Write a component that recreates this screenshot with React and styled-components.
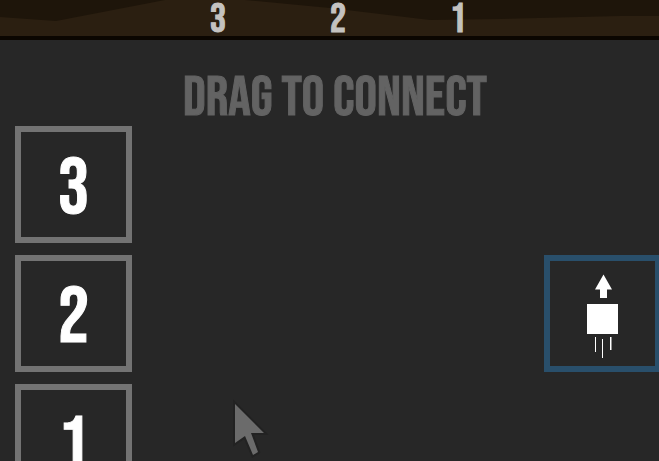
import React from "react";
import styled, { createGlobalStyle } from "styled-components";

const GlobalStyle = createGlobalStyle`
  * {
    box-sizing: border-box;
  }
  body {
    margin: 0;
    background: #272727;
    overflow: hidden;
    font-family: "Bebas Neue", "Liberation Sans Narrow", "Liberation Sans",
      sans-serif;
    font-weight: 400;
    -webkit-text-stroke: 1px currentColor;
  }
`;

const Page = styled.main`
  position: relative;
  height: 100vh;
  overflow: hidden;
`;

/* the board runs a little past the right edge of the window */
const Board = styled.div`
  width: calc(100% + 17px);
`;

const Scene = styled.header`
  position: relative;
  height: 40px;
  background: #1e150a;
  border-bottom: 4px solid #0b0601;
`;

const Hills = styled.svg`
  position: absolute;
  inset: 0;
  width: 100%;
  height: 100%;
`;

const Lanes = styled.div`
  position: relative;
  display: grid;
  grid-template-columns: repeat(3, 120px);
  justify-content: center;
  text-align: center;
  color: #c4c2c0;
  font-size: 40px;
  line-height: 40px;
`;

const Title = styled.h1`
  margin: 0;
  padding: 32px 6px 0 0;
  text-align: center;
  text-transform: uppercase;
  color: #636363;
  font-size: 56px;
  font-weight: 400;
  line-height: 54px;
`;

const Columns = styled.div`
  display: flex;
  justify-content: space-between;
  align-items: flex-start;
  padding: 0 15px;
`;

const Column = styled.div`
  display: grid;
  grid-auto-rows: 117px;
  gap: 12px;
`;

const Node = styled.button`
  display: flex;
  align-items: center;
  justify-content: center;
  grid-row: ${(props) => props.$row};
  width: 117px;
  padding: 0;
  border: 6px solid ${(props) => props.$color};
  border-radius: 0;
  background: #272727;
  color: #fff;
  font: inherit;
`;

const NodeLabel = styled.span`
  padding-top: 10px;
  font-size: 78px;
  line-height: 94px;
`;

const Pointer = styled.svg`
  position: absolute;
  left: 229px;
  top: 398px;
`;

const numbers = [3, 2, 1];

const JumpIcon = () => (
  <svg width="105" height="105" viewBox="0 0 105 105" fill="#fff">
    <path d="M53.500 13.500 62 28.500H57V37H50V28.500H45Z" />
    <path d="M37 43H68V73H37Z" />
    <path d="M45 76h1v15h-1zM52 78h1v19h-1zM60 76h1.500v13H60z" />
  </svg>
);

const App = () => (
  <Page>
    <GlobalStyle />
    <Board>
      <Scene>
        <Hills viewBox="0 0 676 36" preserveAspectRatio="none">
          <path
            d="M0 17 56 21 165 0H245L330 8 430 20 500 19 620 16H676V36H0Z"
            fill="#2b1f11"
          />
        </Hills>
        <Lanes>
          {numbers.map((n) => (
            <span key={n}>{n}</span>
          ))}
        </Lanes>
      </Scene>
      <Title>Drag to connect</Title>
      <Columns>
        <Column>
          {numbers.map((n, i) => (
            <Node key={n} type="button" $row={i + 1} $color="#737373">
              <NodeLabel>{n}</NodeLabel>
            </Node>
          ))}
        </Column>
        <Column>
          <Node type="button" aria-label="Jump" $row={2} $color="#294f6b">
            <JumpIcon />
          </Node>
        </Column>
      </Columns>
    </Board>
    <Pointer width="42" height="63" viewBox="0 0 42 63" aria-hidden="true">
      <path
        d="M6 6 35 35H22L29 54 24 57 16 38 6 45Z"
        fill="#6b6b6b"
        stroke="#222"
        strokeWidth="4"
        paintOrder="stroke"
      />
    </Pointer>
  </Page>
);

export default App;
